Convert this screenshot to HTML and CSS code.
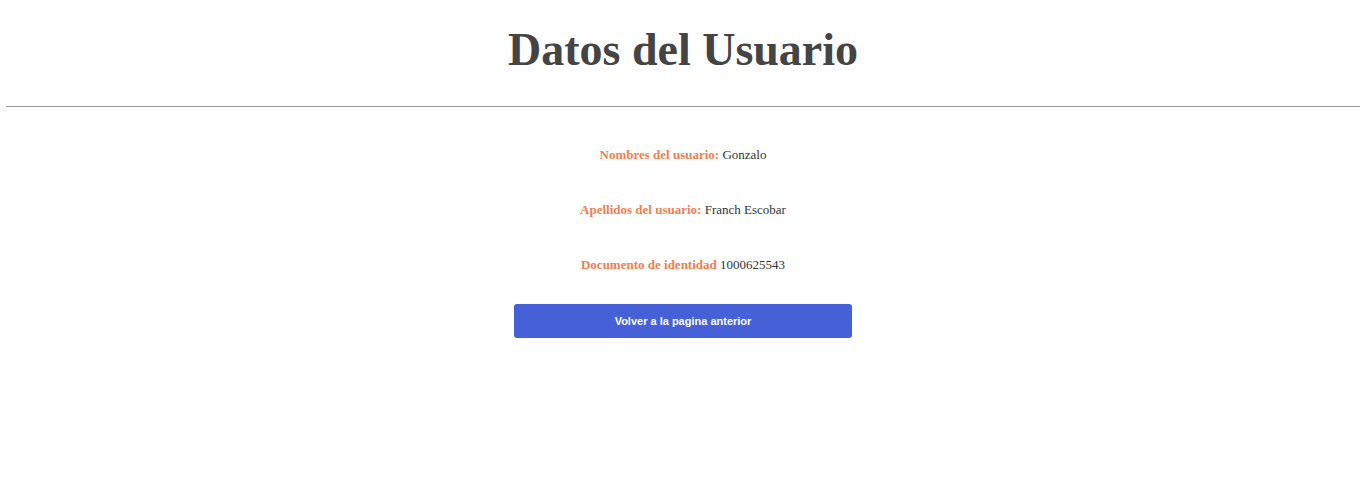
FILE: index.html
```html
<!DOCTYPE html>
<html>
<head>
<meta charset="utf-8">
<link rel="stylesheet" href="styles.css">
</head>
<body>
<h1 class="title">Datos del Usuario</h1>
<hr class="divider">
<main class="content">
  <p class="row"><span class="label">Nombres del usuario:</span> Gonzalo</p>
  <p class="row"><span class="label">Apellidos del usuario:</span> Franch Escobar</p>
  <p class="row"><span class="label">Documento de identidad</span> 1000625543</p>
  <button class="back">Volver a la pagina anterior</button>
</main>
</body>
</html>
```
FILE: styles.css
```css
html, body { margin: 0; padding: 0; background: #fff; }
body {
  font-family: "Liberation Serif", "Times New Roman", serif;
  padding: 0 6px;
}
.title {
  margin: 0;
  padding-top: 22px;
  text-align: center;
  font-size: 46px;
  font-weight: bold;
  color: #444;
  line-height: 56px;
}
.divider {
  margin: 28px 0 0;
  border: 0;
  border-top: 1px solid #999;
  height: 0;
}
.content {
  display: flex;
  flex-direction: column;
  align-items: center;
  padding-top: 40px;
}
.row {
  margin: 0 0 40px;
  font-size: 13px;
  line-height: 15px;
  color: #333;
}
.label { color: #f0804f; font-weight: bold; }
.back {
  margin-top: -8px;
  width: 338px;
  height: 34px;
  border: 0;
  border-radius: 3px;
  background: #4660d8;
  color: #fff;
  font-family: "Liberation Sans", Arial, sans-serif;
  font-weight: bold;
  font-size: 11px;
}
```
